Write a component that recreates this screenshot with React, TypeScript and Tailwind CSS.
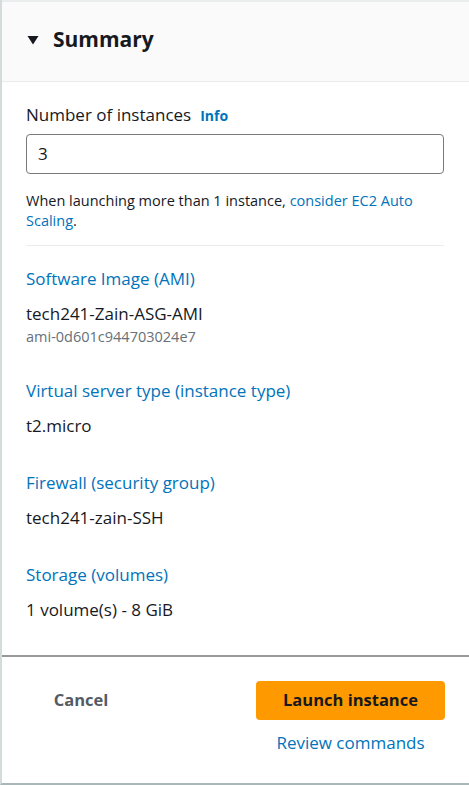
import React from "react";

const font = { fontFamily: '"Open Sans", "Noto Sans", Arial, sans-serif' };

function Field({ label, value, sub }: { label: string; value: string; sub?: string }) {
  return (
    <div className="flex flex-col">
      <a className="text-[17px] leading-[22px] text-[#0073bb]">{label}</a>
      <div className="mt-[13px] text-[17px] leading-[22px] text-[#16191f]">{value}</div>
      {sub && <div className="text-[14.5px] leading-[16px] text-[#687078] mt-[4px]">{sub}</div>}
    </div>
  );
}

export default function App() {
  return (
    <div style={font} className="w-[469px] h-[785px] bg-white border-l-2 border-[#d5dbdb] border-b-2 border-b-[#aab7b8] flex flex-col">
      <div className="h-[2px] bg-[#eaeded]" />
      <div className="h-[80px] bg-[#fafafa] border-b border-[#e9ebed] flex items-center pl-[25px] gap-[14px] pb-[4px]">
        <svg width="12" height="10" viewBox="0 0 12 10">
          <path d="M0.5 1 L11.5 1 L6 9.5 Z" fill="#16191f" />
        </svg>
        <h2 className="text-[21px] font-bold text-[#16191f] leading-none">Summary</h2>
      </div>

      <div className="flex-1 px-[24px] pt-[22px] flex flex-col">
        <div className="flex items-baseline gap-[9px]">
          <span className="text-[17px] leading-[22px] text-[#16191f]">Number of instances</span>
          <a className="text-[14px] font-bold text-[#0073bb]">Info</a>
        </div>
        <div className="mt-[8px] h-[40px] w-[418px] border border-[#7a7a7a] rounded-[4px] flex items-center px-[11px] text-[17px] text-[#16191f]">
          3
        </div>
        <p className="mt-[17px] text-[14.5px] leading-[20px] text-[#16191f] w-[418px] pr-[20px]">
          When launching more than 1 instance, <a className="text-[#0073bb]">consider EC2 Auto</a>
          <br />
          <a className="text-[#0073bb]">Scaling</a>.
        </p>
        <div className="mt-[14px] h-px w-[418px] bg-[#eaeded]" />

        <div className="mt-[22px] flex flex-col gap-[35px]">
          <Field label="Software Image (AMI)" value="tech241-Zain-ASG-AMI" sub="ami-0d601c944703024e7" />
          <Field label="Virtual server type (instance type)" value="t2.micro" />
          <Field label="Firewall (security group)" value="tech241-zain-SSH" />
          <Field label="Storage (volumes)" value="1 volume(s) - 8 GiB" />
        </div>
      </div>

      <div className="h-[2px] bg-[#999]" />
      <div className="h-[126px] flex pl-[24px] pr-[24px] pt-[24px]">
        <div className="w-[110px] h-[38px] flex items-center justify-center text-[16.5px] font-bold text-[#545b64]">
          Cancel
        </div>
        <div className="ml-auto flex flex-col items-center w-[189px]">
          <button className="w-[189px] h-[39px] rounded-[4px] bg-[#ff9900] text-[16.5px] font-bold text-[#16191f]">
            Launch instance
          </button>
          <a className="mt-[12px] text-[17px] leading-[22px] text-[#0073bb]">Review commands</a>
        </div>
      </div>
    </div>
  );
}
